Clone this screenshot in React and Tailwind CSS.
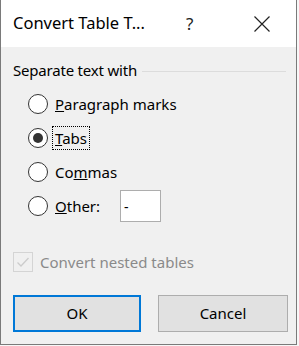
import React from "react";

const font = { fontFamily: '"Noto Sans", "Open Sans", Arial, sans-serif' };

const Radio = ({ checked, children, focus }) => (
  <div className="flex items-center h-[20px]">
    <span className="w-[20px] h-[20px] rounded-full border border-[#333] bg-white flex items-center justify-center shrink-0">
      {checked && <span className="w-[10px] h-[10px] rounded-full bg-[#333]" />}
    </span>
    <span
      className={
        "ml-[5px] px-[2px] leading-[22px] " +
        (focus ? "outline outline-1 outline-dotted outline-black" : "")
      }
    >
      {children}
    </span>
  </div>
);

export default function App() {
  return (
    <div className="w-[299px] h-[346px] bg-[#f7f7f7] text-[15px] text-black" style={font}>
      <div className="w-[297px] h-[345px] border-l border-r border-b border-[#7a7a7a] bg-[#f0f0f0] flex flex-col">
        <div className="h-[47px] bg-white flex items-center pl-[12px] shrink-0">
          <span className="w-[173px] text-[16.5px] whitespace-nowrap">Convert Table T...</span>
          <span className="w-[68px] text-[17px] text-[#222]">?</span>
          <svg width="16" height="16" viewBox="0 0 16 16">
            <path d="M0.5 0.5 L15.5 15.5 M15.5 0.5 L0.5 15.5" stroke="#222" strokeWidth="1.2" fill="none" />
          </svg>
        </div>

        <div className="flex items-center pl-[12px] pr-[10px] mt-[12px] h-[22px]">
          <span className="text-[15px] tracking-[-0.2px]">Separate text with</span>
          <span className="flex-1 ml-[5px] h-px bg-[#dcdcdc] mt-[2px]" />
        </div>

        <div className="pl-[27px] mt-[6px] flex flex-col">
          <div className="h-[34px] flex items-center">
            <Radio>
              <u>P</u>aragraph marks
            </Radio>
          </div>
          <div className="h-[34px] flex items-center">
            <Radio checked focus>
              <u>T</u>abs
            </Radio>
          </div>
          <div className="h-[34px] flex items-center">
            <Radio>
              Co<u>m</u>mas
            </Radio>
          </div>
          <div className="h-[34px] flex items-center">
            <Radio>
              <u>O</u>ther:
            </Radio>
            <div className="ml-[18px] w-[41px] h-[32px] border border-[#adadad] bg-white flex items-center pl-[3px] text-[14px]">
              -
            </div>
          </div>
        </div>

        <div className="flex items-center pl-[12px] mt-[29px] h-[20px]">
          <span className="w-[20px] h-[20px] border border-[#d4d4d4] flex items-center justify-center">
            <svg width="14" height="14" viewBox="0 0 14 14">
              <path d="M1.5 7.5 L5 11 L12.5 3" stroke="#cccccc" strokeWidth="1.3" fill="none" />
            </svg>
          </span>
          <span className="ml-[7px] text-[#8a8a8a]">Convert nested tables</span>
        </div>

        <div className="flex pl-[12px] mt-[23px] gap-[17px]">
          <button className="w-[128px] h-[37px] border-2 border-[#0078d7] bg-[#e1e1e1] text-[15px]">
            OK
          </button>
          <button className="w-[130px] h-[37px] border border-[#adadad] bg-[#e1e1e1] text-[15px]">
            Cancel
          </button>
        </div>
      </div>
    </div>
  );
}
